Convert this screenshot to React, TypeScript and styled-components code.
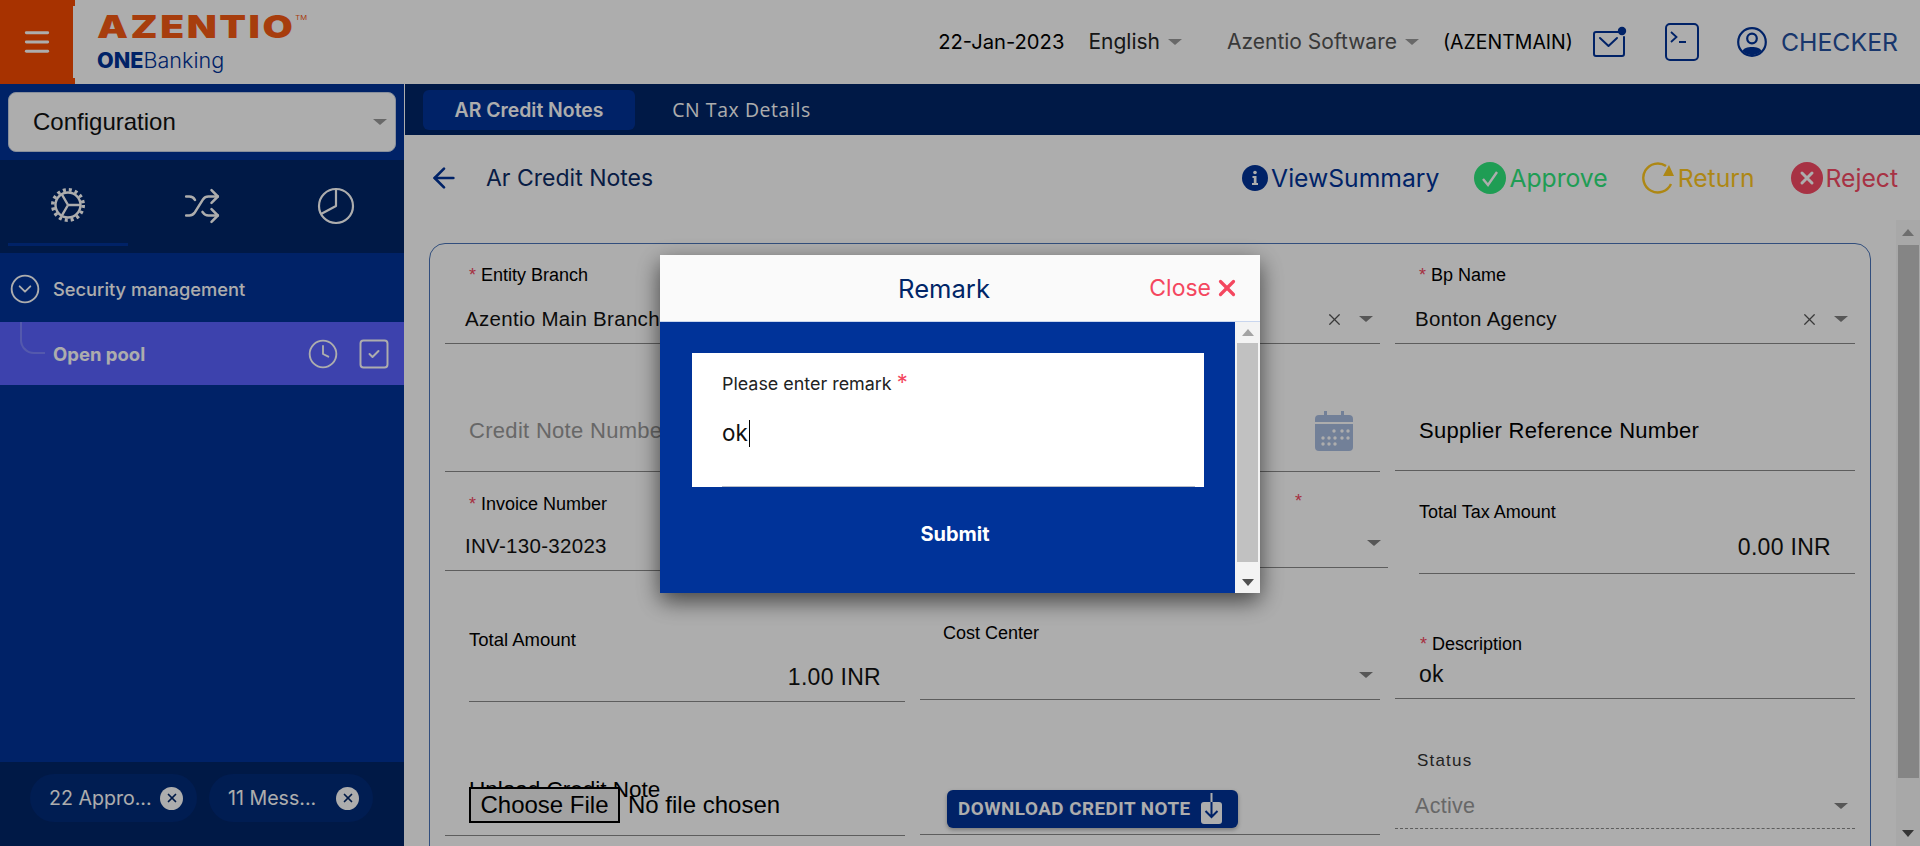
import { ArrowLeft, CircleChevronDown, Clock, Menu, Shuffle, SquareCheck, X } from "lucide-react";
import styled, { createGlobalStyle } from "styled-components";

const GlobalStyle = createGlobalStyle`
    html, body {
        margin: 0;
        padding: 0;
        height: 100%;
        overflow: hidden;
        background: #ffffff;
    }
    * {
        box-sizing: border-box;
    }
`;

const Page = styled.div`
    display: flex;
    flex-direction: column;
    width: 1920px;
    height: 846px;
    overflow: hidden;
    font-family: "Inter", "Liberation Sans", sans-serif;
`;

const Header = styled.header`
    display: flex;
    align-items: center;
    flex: 0 0 84px;
    padding-right: 22px;
    background: #ffffff;
`;

const MenuBtn = styled.div`
    position: relative;
    display: flex;
    align-items: center;
    justify-content: flex-start;
    align-self: stretch;
    width: 75px;
    padding-left: 21px;
    background: #f74b00;
    color: #ffffff;

    &:after {
        content: "";
        position: absolute;
        right: 0;
        top: 6px;
        bottom: 6px;
        width: 2px;
        background: #ffffff;
    }
`;

const Logo = styled.div`
    display: flex;
    flex-direction: column;
    margin-left: 22px;
    margin-right: auto;
`;

const LogoMark = styled.div`
    color: #f75a14;
    font-size: 31px;
    font-weight: 900;
    line-height: 30px;
    letter-spacing: 2px;
    transform: scaleX(1.26);
    transform-origin: left center;
    white-space: nowrap;

    sup {
        font-size: 6px;
        font-weight: 400;
        letter-spacing: 0;
        vertical-align: 18px;
        line-height: 0;
    }
`;

const LogoSub = styled.div`
    margin-top: 6px;
    color: #003399;
    font-size: 21.6px;
    font-weight: 300;
    line-height: 24px;

    b {
        font-weight: 800;
    }
`;

const HeadText = styled.span<{ $ml?: number; $color?: string; $size?: number }>`
    margin-left: ${(p) => p.$ml || 0}px;
    color: ${(p) => p.$color || "#000000"};
    font-size: ${(p) => p.$size || 20}px;
    line-height: 24px;
    white-space: nowrap;
`;

const Caret = styled.span<{ $size?: number; $color?: string; $ml?: number }>`
    display: inline-block;
    flex: none;
    margin-left: ${(p) => p.$ml || 0}px;
    border-left: ${(p) => p.$size || 7}px solid transparent;
    border-right: ${(p) => p.$size || 7}px solid transparent;
    border-top: ${(p) => (p.$size || 7) - 1}px solid ${(p) => p.$color || "#808080"};
`;

const HeadIcon = styled.span<{ $ml: number }>`
    display: flex;
    margin-left: ${(p) => p.$ml}px;
`;

const Body = styled.div`
    display: flex;
    flex: 1;
    min-height: 0;
`;

const Sidebar = styled.aside`
    display: flex;
    flex-direction: column;
    flex: 0 0 404px;
    background: #003399;
`;

const SelectWrap = styled.div`
    flex: 0 0 76px;
    padding: 8px;
`;

const SelectBox = styled.div`
    display: flex;
    align-items: center;
    justify-content: space-between;
    height: 60px;
    padding: 0 8px 0 24px;
    background: #ffffff;
    border: 1px solid #c9d3e6;
    border-radius: 8px;
    color: #111111;
    font-family: "Liberation Sans", sans-serif;
    font-size: 24px;
`;

const ModuleTabs = styled.div`
    display: flex;
    gap: 14px;
    flex: 0 0 93px;
    padding-left: 8px;
    background: #002567;
`;

const ModuleTab = styled.div<{ $active?: boolean }>`
    display: flex;
    align-items: flex-start;
    justify-content: center;
    width: 120px;
    height: 86px;
    padding-top: 27px;
    color: #ffffff;
    border-bottom: 3px solid ${(p) => (p.$active ? "#003399" : "transparent")};
`;

const NavGroup = styled.div`
    display: flex;
    align-items: center;
    gap: 12px;
    height: 69px;
    padding: 2px 0 0 9px;
    color: #ffffff;
    font-size: 18.3px;
    font-weight: 500;
`;

const NavItem = styled.div`
    position: relative;
    display: flex;
    align-items: center;
    height: 63px;
    padding: 0 12px 0 53px;
    background: #5a62ff;
    color: #ffffff;
    font-size: 18.5px;
    font-weight: 700;
`;

const NavLine = styled.span`
    position: absolute;
    left: 20px;
    top: 0;
    width: 25px;
    height: 32px;
    border-left: 2px solid #7d84ff;
    border-bottom: 2px solid #7d84ff;
    border-bottom-left-radius: 14px;
`;

const NavActions = styled.div`
    display: flex;
    align-items: center;
    gap: 17px;
    margin-left: auto;
`;

const Spacer = styled.div`
    flex: 1;
`;

const Footer = styled.div`
    display: flex;
    gap: 12px;
    flex: 0 0 84px;
    padding: 12px 0 0 30px;
    background: #002567;
`;

const Chip = styled.div<{ $width: number }>`
    display: flex;
    align-items: center;
    justify-content: space-between;
    width: ${(p) => p.$width}px;
    height: 48px;
    padding: 0 14px 0 19px;
    border-radius: 24px;
    background: #002b79;
    color: #ffffff;
    font-size: 19.6px;
    white-space: nowrap;
`;

const ChipClose = styled.span`
    display: flex;
    align-items: center;
    justify-content: center;
    width: 23px;
    height: 23px;
    border-radius: 50%;
    background: #ffffff;
    color: #002567;
`;

const Main = styled.main`
    display: flex;
    flex-direction: column;
    flex: 1;
    min-width: 0;
    margin-left: 1px;
`;

const TabBar = styled.div`
    display: flex;
    align-items: center;
    flex: 0 0 51px;
    padding-left: 18px;
    background: #002567;
`;

const Tab = styled.div<{ $active?: boolean }>`
    display: flex;
    align-items: center;
    justify-content: center;
    width: ${(p) => (p.$active ? 212 : 213)}px;
    height: 40px;
    border-radius: 6px;
    background: ${(p) => (p.$active ? "#003399" : "transparent")};
    color: #ffffff;
    font-family: ${(p) => (p.$active ? '"Inter"' : '"Open Sans"')}, sans-serif;
    font-size: 19.4px;
    font-weight: ${(p) => (p.$active ? 600 : 500)};
    letter-spacing: ${(p) => (p.$active ? 0 : 0.6)}px;
`;

const TitleRow = styled.div`
    display: flex;
    align-items: center;
    flex: 0 0 85px;
    padding: 0 22px 0 23px;
    color: #003399;
`;

const Title = styled.h1`
    margin: 0 auto 0 26px;
    color: #0c2c66;
    font-size: 23px;
    font-weight: 400;
`;

const Action = styled.div<{ $color: string; $ml: number; $gap: number }>`
    display: flex;
    align-items: center;
    gap: ${(p) => p.$gap}px;
    margin-left: ${(p) => p.$ml}px;
    color: ${(p) => p.$color};
    font-size: 24.7px;
    line-height: 32px;
`;

const ContentRow = styled.div`
    display: flex;
    flex: 1;
    min-height: 0;
`;

const CardArea = styled.div`
    flex: 1;
    min-width: 0;
    padding: 23px 25px 0 24px;
    overflow: hidden;
`;

const Card = styled.section`
    display: grid;
    grid-template-columns: repeat(3, 460px);
    grid-template-rows: 100px 128px 102px 128px 134px 60px;
    column-gap: 15px;
    padding-left: 15px;
    border: 1px solid #4a74b8;
    border-radius: 16px;
`;

const Field = styled.div<{ $left?: number; $right?: number; $lift?: number; $line?: string }>`
    display: flex;
    flex-direction: column;
    justify-content: flex-end;
    position: relative;
    margin: 0 ${(p) => p.$right || 0}px ${(p) => p.$lift || 0}px ${(p) => p.$left || 0}px;
    border-bottom: 1px ${(p) => p.$line || "solid"} #8a8a8a;
`;

const Label = styled.div<{ $pad: number; $gap: number; $size?: number; $spaced?: boolean }>`
    margin-bottom: ${(p) => p.$gap}px;
    padding-left: ${(p) => p.$pad}px;
    color: ${(p) => (p.$spaced ? "#333333" : "#000000")};
    font-family: "Liberation Sans", sans-serif;
    font-size: ${(p) => p.$size || 18}px;
    letter-spacing: ${(p) => (p.$spaced ? 1.2 : 0)}px;
    line-height: 20px;
    white-space: nowrap;

    i {
        margin-right: 5px;
        color: #f4475f;
        font-style: normal;
    }
`;

const ValueRow = styled.div<{ $pad: number; $endPad?: number; $height?: number; $mb?: number }>`
    display: flex;
    align-items: center;
    height: ${(p) => p.$height || 32}px;
    margin-bottom: ${(p) => p.$mb ?? 8}px;
    padding: 0 ${(p) => p.$endPad || 7}px 0 ${(p) => p.$pad}px;
`;

const Value = styled.span<{ $color?: string; $end?: boolean; $size?: number }>`
    flex: 1;
    color: ${(p) => p.$color || "#111111"};
    font-family: "Liberation Sans", sans-serif;
    font-size: ${(p) => p.$size || 20.5}px;
    letter-spacing: 0.3px;
    text-align: ${(p) => (p.$end ? "right" : "left")};
    white-space: nowrap;
`;

const ClearIcon = styled.span`
    display: flex;
    margin-right: 15px;
    color: #555555;
`;

const FileInput = styled.input`
    position: relative;
    width: 420px;
    height: 36px;
    color: #000000;
    font-family: "Liberation Sans", sans-serif;
    font-size: 24px;

    &::file-selector-button {
        width: 151px;
        height: 36px;
        margin-right: 8px;
        padding: 0;
        border: 2px solid #000000;
        border-radius: 0;
        background: #efefef;
        color: #000000;
        font-family: "Liberation Sans", sans-serif;
        font-size: 24px;
    }
`;

const DownloadBtn = styled.div`
    display: flex;
    align-items: center;
    justify-content: space-between;
    width: 291px;
    height: 38px;
    margin: 0 0 6px 27px;
    padding: 0 15px 0 11px;
    border-radius: 6px;
    background: #003399;
    box-shadow: 0 2px 4px rgba(0, 0, 0, 0.3);
    color: #ffffff;
    font-family: "Roboto", sans-serif;
    font-size: 18.8px;
    font-weight: 700;
    letter-spacing: 0.5px;
    white-space: nowrap;
`;

const PageScroll = styled.div`
    display: flex;
    flex-direction: column;
    align-items: center;
    flex: 0 0 24px;
    background: #f8f8f8;
`;

const ScrollThumb = styled.div<{ $width: number; $height: number; $color: string }>`
    flex: 0 0 ${(p) => p.$height}px;
    width: ${(p) => p.$width}px;
    background: ${(p) => p.$color};
`;

const ScrollArrow = styled.span<{ $down?: boolean; $gap: number; $color: string }>`
    flex: none;
    margin: ${(p) => p.$gap}px 0;
    border-left: 6px solid transparent;
    border-right: 6px solid transparent;
    border-${(p) => (p.$down ? "top" : "bottom")}: 7px solid ${(p) => p.$color};
`;

const Backdrop = styled.div`
    position: fixed;
    inset: 0;
    display: flex;
    align-items: center;
    justify-content: center;
    background: rgba(0, 0, 0, 0.32);
`;

const Modal = styled.div`
    display: flex;
    flex-direction: column;
    width: 600px;
    height: 338px;
    margin-top: 2px;
    box-shadow: 0 8px 22px rgba(0, 0, 0, 0.62);
`;

const ModalHead = styled.div`
    display: grid;
    grid-template-columns: 1fr auto 1fr;
    align-items: center;
    flex: 0 0 67px;
    padding: 0 20px 0 0;
    background: #fafafa;
    border-bottom: 1px solid #c9d6ee;
`;

const ModalTitle = styled.div`
    margin-right: 12px;
    color: #002567;
    font-size: 25.6px;
`;

const CloseBtn = styled.div`
    display: flex;
    align-items: center;
    justify-content: flex-end;
    gap: 3px;
    color: #f4475f;
    font-size: 23px;
`;

const ModalBody = styled.div`
    display: flex;
    flex: 1;
    min-height: 0;
`;

const ModalContent = styled.div`
    display: flex;
    flex-direction: column;
    align-items: center;
    flex: 1;
    padding: 31px 31px 0 32px;
    background: #003399;
`;

const RemarkBox = styled.div`
    width: 100%;
    height: 134px;
    padding: 20px 9px 0 30px;
    background: #ffffff;
`;

const RemarkField = styled.div`
    height: 114px;
    border-bottom: 1px solid #b8bdc8;
`;

const RemarkLabel = styled.div`
    color: #222222;
    font-size: 17.9px;
    line-height: 22px;

    i {
        color: #f4475f;
        font-size: 22px;
        font-style: normal;
        line-height: 10px;
    }
`;

const RemarkValue = styled.div`
    display: flex;
    align-items: center;
    margin-top: 24px;
    color: #111111;
    font-size: 22.4px;
    line-height: 28px;
`;

const Cursor = styled.span`
    width: 1px;
    height: 27px;
    margin-left: 1px;
    background: #000000;
`;

const Submit = styled.div`
    margin-top: 33px;
    padding-left: 14px;
    color: #ffffff;
    font-size: 20px;
    font-weight: 700;
    line-height: 28px;
`;

const ModalScroll = styled.div`
    display: flex;
    flex-direction: column;
    align-items: center;
    flex: 0 0 25px;
    background: #f3f3f3;
`;

const GearIcon = () => (
    <svg width="36" height="36" viewBox="0 0 36 36" fill="none" stroke="currentColor">
        <circle cx="18" cy="18" r="15.2" strokeWidth="3.6" strokeDasharray="3 3" />
        <circle cx="18" cy="18" r="12.5" strokeWidth="2.4" />
        <path d="M18 18 L18 6 M18 18 L7.6 24 M18 18 L28.4 24" strokeWidth="2.4" transform="rotate(-30 18 18)" />
    </svg>
);

const PieIcon = () => (
    <svg width="38" height="38" viewBox="0 0 38 38" fill="none" stroke="currentColor" strokeWidth="2.2">
        <circle cx="19" cy="19" r="17" />
        <path d="M19 2 V19 L4 27" strokeLinejoin="round" />
    </svg>
);

const MailIcon = () => (
    <svg width="34" height="32" viewBox="0 0 34 32" fill="none" stroke="#003399" strokeWidth="2">
        <path d="M26 6 H3 Q1 6 1 8 V28 Q1 30 3 30 H29 Q31 30 31 28 V11" strokeLinecap="round" />
        <path d="M7 12 L15.5 20 L24 12" strokeLinecap="round" strokeLinejoin="round" />
        <circle cx="29" cy="5" r="4.2" fill="#003399" stroke="none" />
    </svg>
);

const TerminalIcon = () => (
    <svg width="34" height="38" viewBox="0 0 34 38" fill="none" stroke="#003399" strokeWidth="2">
        <rect x="1" y="1" width="32" height="36" rx="4" />
        <path d="M6 9 L11.5 14 L6 19 M14 19 H21" strokeWidth="1.8" />
    </svg>
);

const UserIcon = () => (
    <svg width="30" height="32" viewBox="0 0 30 32">
        <circle cx="15" cy="16" r="13.8" fill="none" stroke="#003399" strokeWidth="2.2" />
        <circle cx="15" cy="12.5" r="4.8" fill="none" stroke="#003399" strokeWidth="2.2" />
        <path d="M5.5 25 C7 19.5 23 19.5 24.5 25 C20 30.5 10 30.5 5.5 25 Z" fill="#003399" />
    </svg>
);

const InfoIcon = () => (
    <svg width="26" height="26" viewBox="0 0 26 26">
        <circle cx="13" cy="13" r="13" fill="#003399" />
        <circle cx="13" cy="7.5" r="1.8" fill="#ffffff" />
        <path d="M10.5 11 H14.5 V18 H16 V20 H10 V18 H11.8 V13 H10.5 Z" fill="#ffffff" />
    </svg>
);

const ApproveIcon = () => (
    <svg width="32" height="32" viewBox="0 0 32 32">
        <circle cx="16" cy="16" r="16" fill="#2fe77d" />
        <path d="M9 17 L14 23 L23 10" fill="none" stroke="#ffffff" strokeWidth="2.4" />
    </svg>
);

const ReturnIcon = () => (
    <svg width="36" height="32" viewBox="0 0 36 32" fill="none">
        <path d="M24 4 A14.5 14.5 0 1 0 29 22" stroke="#ffc81e" strokeWidth="2.4" />
        <path d="M27 3 L32 14 L21 14 Z" fill="#ffc81e" />
    </svg>
);

const RejectIcon = () => (
    <svg width="32" height="32" viewBox="0 0 32 32">
        <circle cx="16" cy="16" r="16" fill="#f74a65" />
        <path d="M11 11 L21 21 M21 11 L11 21" stroke="#ffffff" strokeWidth="3" strokeLinecap="round" />
    </svg>
);

const CalendarIcon = () => (
    <svg width="38" height="40" viewBox="0 0 38 40">
        <path d="M9 0 H12 V4 H26 V0 H29 V4 H34 Q38 4 38 8 V11 H0 V8 Q0 4 4 4 H9 Z" fill="#a9bde0" />
        <path d="M0 13 H38 V36 Q38 40 34 40 H4 Q0 40 0 36 Z" fill="#a9bde0" />
        <g fill="#ffffff">
            <circle cx="19" cy="20" r="1.7" />
            <circle cx="27" cy="20" r="1.7" />
            <circle cx="33" cy="20" r="1.7" />
            <circle cx="8" cy="27" r="1.7" />
            <circle cx="14" cy="27" r="1.7" />
            <circle cx="20" cy="27" r="1.7" />
            <circle cx="27" cy="27" r="1.7" />
            <circle cx="33" cy="27" r="1.7" />
            <circle cx="8" cy="33" r="1.7" />
            <circle cx="14" cy="33" r="1.7" />
            <circle cx="20" cy="33" r="1.7" />
        </g>
    </svg>
);

const DownloadIcon = () => (
    <svg width="23" height="32" viewBox="0 0 23 32">
        <path d="M11.5 0 V10" stroke="#ffffff" strokeWidth="2" />
        <rect x="1" y="9" width="21" height="22" rx="3" fill="#ffffff" />
        <path d="M11.5 9 V24 M5.5 18 L11.5 24 L17.5 18" fill="none" stroke="#003399" strokeWidth="2" />
    </svg>
);

const App = () => {
    return (
        <Page>
            <GlobalStyle />
            <Header>
                <MenuBtn><Menu size={32} strokeWidth={2.2} /></MenuBtn>
                <Logo>
                    <LogoMark>AZENTIO<sup>TM</sup></LogoMark>
                    <LogoSub><b>ONE</b>Banking</LogoSub>
                </Logo>
                <HeadText $size={20.2}>22-Jan-2023</HeadText>
                <HeadText $ml={24} $size={21} $color="#222222">English</HeadText>
                <Caret $ml={8} $color="#9a9a9a" />
                <HeadText $ml={45} $size={21} $color="#555555">Azentio Software</HeadText>
                <Caret $ml={8} $color="#9a9a9a" />
                <HeadText $ml={24} $size={19.5}>(AZENTMAIN)</HeadText>
                <HeadIcon $ml={20}><MailIcon /></HeadIcon>
                <HeadIcon $ml={38}><TerminalIcon /></HeadIcon>
                <HeadIcon $ml={38}><UserIcon /></HeadIcon>
                <HeadText $ml={14} $size={24.8} $color="#2450a0">CHECKER</HeadText>
            </Header>
            <Body>
                <Sidebar>
                    <SelectWrap>
                        <SelectBox>Configuration<Caret $color="#9a9a9a" /></SelectBox>
                    </SelectWrap>
                    <ModuleTabs>
                        <ModuleTab $active><GearIcon /></ModuleTab>
                        <ModuleTab><Shuffle size={38} strokeWidth={1.6} /></ModuleTab>
                        <ModuleTab><PieIcon /></ModuleTab>
                    </ModuleTabs>
                    <NavGroup><CircleChevronDown size={32} strokeWidth={1.4} />Security management</NavGroup>
                    <NavItem>
                        <NavLine />
                        Open pool
                        <NavActions>
                            <Clock size={32} strokeWidth={1.4} />
                            <SquareCheck size={36} strokeWidth={1.3} />
                        </NavActions>
                    </NavItem>
                    <Spacer />
                    <Footer>
                        <Chip $width={167}>
                            22 Appro...
                            <ChipClose><X size={14} strokeWidth={3} /></ChipClose>
                        </Chip>
                        <Chip $width={164}>
                            11 Mess...
                            <ChipClose><X size={14} strokeWidth={3} /></ChipClose>
                        </Chip>
                    </Footer>
                </Sidebar>
                <Main>
                    <TabBar>
                        <Tab $active>AR Credit Notes</Tab>
                        <Tab>CN Tax Details</Tab>
                    </TabBar>
                    <TitleRow>
                        <ArrowLeft size={32} strokeWidth={2} />
                        <Title>Ar Credit Notes</Title>
                        <Action $color="#003399" $ml={0} $gap={3}><InfoIcon />ViewSummary</Action>
                        <Action $color="#2fe77d" $ml={35} $gap={3}><ApproveIcon />Approve</Action>
                        <Action $color="#ffc81e" $ml={34} $gap={0}><ReturnIcon />Return</Action>
                        <Action $color="#f74a65" $ml={36} $gap={3}><RejectIcon />Reject</Action>
                    </TitleRow>
                    <ContentRow>
                        <CardArea>
                            <Card>
                                <Field>
                                    <Label $pad={24} $gap={18}><i>*</i>Entity Branch</Label>
                                    <ValueRow $pad={20}><Value>Azentio Main Branch</Value></ValueRow>
                                </Field>
                                <Field>
                                    <ValueRow $pad={20}>
                                        <Value>&nbsp;</Value>
                                        <ClearIcon><X size={19} strokeWidth={1.6} /></ClearIcon>
                                        <Caret />
                                    </ValueRow>
                                </Field>
                                <Field>
                                    <Label $pad={24} $gap={18}><i>*</i>Bp Name</Label>
                                    <ValueRow $pad={20}>
                                        <Value>Bonton Agency</Value>
                                        <ClearIcon><X size={19} strokeWidth={1.6} /></ClearIcon>
                                        <Caret />
                                    </ValueRow>
                                </Field>

                                <Field>
                                    <ValueRow $pad={24} $height={64}><Value $color="#999999" $size={22}>Credit Note Number</Value></ValueRow>
                                </Field>
                                <Field>
                                    <ValueRow $pad={20} $endPad={27} $height={64}>
                                        <Value>&nbsp;</Value>
                                        <CalendarIcon />
                                    </ValueRow>
                                </Field>
                                <Field $lift={1}>
                                    <ValueRow $pad={24} $height={62}><Value $color="#000000" $size={22}>Supplier Reference Number</Value></ValueRow>
                                </Field>

                                <Field $lift={3}>
                                    <Label $pad={24} $gap={16}><i>*</i>Invoice Number</Label>
                                    <ValueRow $pad={20}><Value>INV-130-32023</Value></ValueRow>
                                </Field>
                                <Field $lift={6} $right={-8}>
                                    <Label $pad={375} $gap={16}><i>*</i></Label>
                                    <ValueRow $pad={20}>
                                        <Value>&nbsp;</Value>
                                        <Caret />
                                    </ValueRow>
                                </Field>
                                <Field $left={24}>
                                    <Label $pad={0} $gap={9}>Total Tax Amount</Label>
                                    <ValueRow $pad={0} $endPad={24} $mb={10}><Value $end $size={23}>0.00 INR</Value></ValueRow>
                                </Field>

                                <Field $left={24}>
                                    <Label $pad={0} $gap={11} $size={18.5}>Total Amount</Label>
                                    <ValueRow $pad={0} $endPad={24}><Value $end $size={23}>1.00 INR</Value></ValueRow>
                                </Field>
                                <Field $lift={2}>
                                    <Label $pad={23} $gap={16}>Cost Center</Label>
                                    <ValueRow $pad={20}>
                                        <Value>&nbsp;</Value>
                                        <Caret />
                                    </ValueRow>
                                </Field>
                                <Field $lift={3}>
                                    <Label $pad={25} $gap={4}><i>*</i>Description</Label>
                                    <ValueRow $pad={24}><Value $size={23}>ok</Value></ValueRow>
                                </Field>

                                <Field>
                                    <Label $pad={24} $gap={-13} $size={22.5}>Upload Credit Note</Label>
                                    <ValueRow $pad={24} $height={36} $endPad={0} $mb={12}>
                                        <FileInput type="file" />
                                    </ValueRow>
                                </Field>
                                <Field $lift={1}>
                                    <DownloadBtn>
                                        DOWNLOAD CREDIT NOTE
                                        <DownloadIcon />
                                    </DownloadBtn>
                                </Field>
                                <Field $lift={7} $line="dashed">
                                    <Label $pad={22} $gap={19} $size={17} $spaced>Status</Label>
                                    <ValueRow $pad={20} $mb={6}>
                                        <Value $color="#999999" $size={21.5}>Active</Value>
                                        <Caret />
                                    </ValueRow>
                                </Field>
                            </Card>
                        </CardArea>
                        <PageScroll>
                            <ScrollArrow $gap={9} $color="#a3a3a3" />
                            <ScrollThumb $width={21} $height={533} $color="#c4c4c4" />
                            <Spacer />
                            <ScrollArrow $down $gap={9} $color="#505050" />
                        </PageScroll>
                    </ContentRow>
                </Main>
            </Body>
            <Backdrop>
                <Modal>
                    <ModalHead>
                        <span />
                        <ModalTitle>Remark</ModalTitle>
                        <CloseBtn>Close<X size={26} strokeWidth={3} /></CloseBtn>
                    </ModalHead>
                    <ModalBody>
                        <ModalContent>
                            <RemarkBox>
                                <RemarkField>
                                    <RemarkLabel>Please enter remark <i>*</i></RemarkLabel>
                                    <RemarkValue>ok<Cursor /></RemarkValue>
                                </RemarkField>
                            </RemarkBox>
                            <Submit>Submit</Submit>
                        </ModalContent>
                        <ModalScroll>
                            <ScrollArrow $gap={7} $color="#a3a3a3" />
                            <ScrollThumb $width={21} $height={219} $color="#c1c1c1" />
                            <Spacer />
                            <ScrollArrow $down $gap={7} $color="#505050" />
                        </ModalScroll>
                    </ModalBody>
                </Modal>
            </Backdrop>
        </Page>
    );
};

export default App;
